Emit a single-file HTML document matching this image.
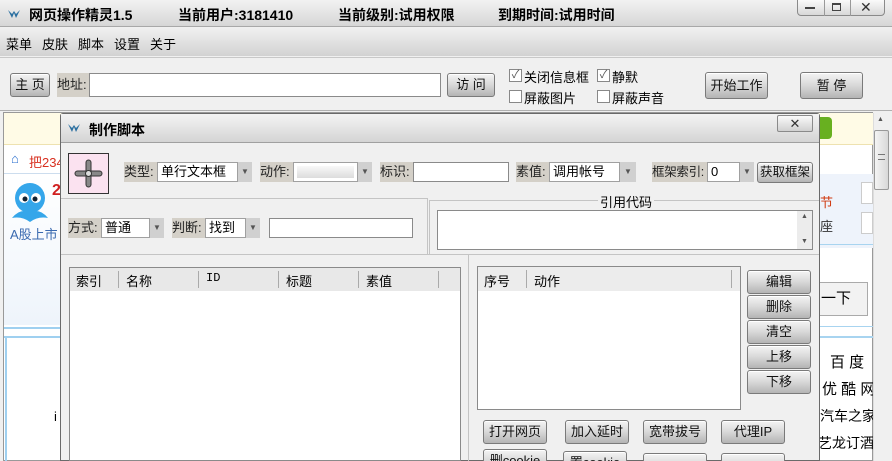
<!DOCTYPE html>
<html style="width:892px;height:461px;overflow:hidden"><head><meta charset="utf-8"><style>
*{margin:0;padding:0;box-sizing:border-box}
body{width:892px;height:461px;overflow:hidden;position:relative;background:#f0f0f0;font-family:"Liberation Sans","Noto Sans CJK SC",sans-serif;font-size:13px;color:#000}
.a{position:absolute;white-space:nowrap}
.btn{position:absolute;border:1px solid #7a7a7a;border-radius:3px;background:linear-gradient(#f4f4f4,#d8d8d8 50%,#b4b4b4);text-align:center;font-size:13px;color:#111;box-shadow:inset 0 1px 0 #fff;white-space:nowrap;overflow:hidden}
.lbl{position:absolute;background:#d4d0c8;height:20px;line-height:20px;font-size:13px;color:#222;white-space:nowrap;overflow:hidden}
.inp{position:absolute;background:#fff;border:1px solid #8a8a8a}
.sel{position:absolute;background:#fff;border:1px solid #a0a0a0;height:20px;line-height:18px;padding-left:3px;font-size:13px;white-space:nowrap;overflow:hidden}
.sel i{position:absolute;top:3px;bottom:3px;right:3px;width:26px;background:linear-gradient(#f8f8f8,#dcdcdc)}
.arr{position:absolute;background:#d0d0d0;height:20px;width:14px;color:#555;font-size:8px;line-height:20px;text-align:center}
.cb{position:absolute;width:13px;height:13px;border:1px solid #888;background:#fff;font-size:11px;line-height:11px;text-align:center;color:#555}
.b{font-weight:bold}
#clip{position:absolute;left:0;top:0;width:892px;height:461px;overflow:hidden}
</style></head><body><div id="clip">
<div class="a" style="left:0;top:0;width:892px;height:27px;background:linear-gradient(#f2f2f2,#d6d6d6);border-bottom:1px solid #a8a8a8"></div>
<svg class="a" style="left:7px;top:8px" width="14" height="12"><path d="M1 2 L5 10 L7 5 L9 10 L13 2 L9 6 L7 3 L5 6Z" fill="#2a6fa0"/></svg>
<div class="a b" style="left:29px;top:5px;font-size:14px">网页操作精灵1.5</div>
<div class="a b" style="left:178px;top:5px;font-size:14px">当前用户:3181410</div>
<div class="a b" style="left:338px;top:5px;font-size:14px">当前级别:试用权限</div>
<div class="a b" style="left:498px;top:5px;font-size:14px">到期时间:试用时间</div>
<div class="a" style="left:797px;top:-1px;width:88px;height:17px;border:1px solid #8a8a8a;border-radius:0 0 4px 4px;background:linear-gradient(#fafafa,#d8d8d8)"></div>
<div class="a" style="left:824px;top:0;width:1px;height:16px;background:#999"></div>
<div class="a" style="left:850px;top:0;width:1px;height:16px;background:#999"></div>
<div class="a" style="left:805px;top:7px;width:10px;height:2px;background:#444"></div>
<div class="a" style="left:832px;top:3px;width:9px;height:8px;border:1px solid #444;border-top-width:2px"></div>
<div class="a" style="left:860px;top:-1px;font-size:14px;color:#333">✕</div>
<div class="a" style="left:0;top:28px;width:892px;height:28px;background:linear-gradient(#f0f0f0,#d2d2d2)"></div>
<div class="a" style="left:6px;top:34px">菜单</div>
<div class="a" style="left:42px;top:34px">皮肤</div>
<div class="a" style="left:78px;top:34px">脚本</div>
<div class="a" style="left:114px;top:34px">设置</div>
<div class="a" style="left:150px;top:34px">关于</div>
<div class="a" style="left:0;top:57px;width:892px;height:1px;background:#c8c8c8"></div>
<div class="btn" style="left:10px;top:73px;width:40px;height:24px;line-height:22px">主 页</div>
<div class="lbl" style="left:57px;top:73px;width:32px;height:24px;line-height:24px">地址:</div>
<div class="inp" style="left:89px;top:73px;width:352px;height:24px"></div>
<div class="btn" style="left:447px;top:73px;width:48px;height:24px;line-height:22px">访 问</div>
<div class="cb" style="left:509px;top:69px">✓</div><div class="a" style="left:524px;top:67px">关闭信息框</div>
<div class="cb" style="left:597px;top:69px">✓</div><div class="a" style="left:612px;top:67px">静默</div>
<div class="cb" style="left:509px;top:90px"></div><div class="a" style="left:524px;top:88px">屏蔽图片</div>
<div class="cb" style="left:597px;top:90px"></div><div class="a" style="left:612px;top:88px">屏蔽声音</div>
<div class="btn" style="left:705px;top:72px;width:63px;height:27px;line-height:25px">开始工作</div>
<div class="btn" style="left:800px;top:72px;width:63px;height:27px;line-height:25px">暂 停</div>
<div class="a" style="left:0;top:110px;width:892px;height:1px;background:#b0b0b0"></div>
<div class="a" style="left:3px;top:112px;width:870px;height:349px;background:#fff;border:1px solid #999"></div>
<div class="a" style="left:4px;top:113px;width:869px;height:32px;background:#fffbe6;border-bottom:1px solid #eee2b0"></div>
<div class="a" style="left:4px;top:146px;width:56px;height:28px;background:#fff;border-bottom:1px solid #cde"></div>
<div class="a" style="left:11px;top:151px;color:#2a6fcf;font-size:13px">⌂</div>
<div class="a" style="left:29px;top:152px;color:#d83020">把234</div>
<div class="a" style="left:4px;top:175px;width:56px;height:150px;background:linear-gradient(#fff,#eef4fb)"></div>
<svg class="a" style="left:8px;top:180px" width="44" height="45"><ellipse cx="22" cy="18" rx="15" ry="15" fill="#35a6ea"/><circle cx="16" cy="18" r="5" fill="#fff"/><circle cx="28" cy="18" r="5" fill="#fff"/><circle cx="17" cy="19" r="2.5" fill="#123"/><circle cx="27" cy="19" r="2.5" fill="#123"/><path d="M4 38 Q12 28 22 32 Q32 28 40 38 Q30 36 22 42 Q14 36 4 38Z" fill="#35a6ea"/></svg>
<div class="a b" style="left:52px;top:182px;color:#d02020;font-size:16px">2</div>
<div class="a" style="left:10px;top:224px;color:#3a6ab0">A股上市</div>
<div class="a" style="left:4px;top:327px;width:56px;height:2px;background:#9fd0f0"></div>
<div class="a" style="left:4px;top:336px;width:56px;height:2px;background:#9fd0f0"></div>
<div class="a" style="left:5px;top:338px;width:2px;height:123px;background:#9fd0f0"></div>
<div class="a" style="left:54px;top:409px">i</div>
<div class="a" style="left:820px;top:117px;width:12px;height:22px;background:#68b020;border-radius:0 4px 4px 0"></div>
<div class="a" style="left:819px;top:174px;width:54px;height:74px;background:#eef3fb"></div>
<div class="a" style="left:820px;top:192px;color:#d03a10">节</div>
<div class="a" style="left:820px;top:216px;color:#333">座</div>
<div class="a" style="left:861px;top:182px;width:12px;height:22px;border:1px solid #ccc;background:#fff"></div>
<div class="a" style="left:861px;top:212px;width:12px;height:22px;border:1px solid #ccc;background:#fff"></div>
<div class="a" style="left:819px;top:244px;width:54px;height:1px;background:#a8d4f0"></div>
<div class="a" style="left:814px;top:282px;width:54px;height:34px;border:1px solid #aaa;background:#f2f2f2;font-size:15px;line-height:32px;padding-left:6px">一下</div>
<div class="a" style="left:819px;top:326px;width:54px;height:1px;background:#a8d4f0"></div>
<div class="a" style="left:819px;top:336px;width:54px;height:2px;background:#a8d4f0"></div>
<div class="a" style="left:830px;top:351px;font-size:15px">百 度</div>
<div class="a" style="left:822px;top:378px;font-size:15px">优 酷 网</div>
<div class="a" style="left:820px;top:406px;font-size:14px">汽车之家</div>
<div class="a" style="left:818px;top:433px;font-size:14px">艺龙订酒</div>
<div class="a" style="left:873px;top:113px;width:17px;height:348px;background:#f0f0f0;border-left:1px solid #ddd"></div>
<div class="a" style="left:877px;top:116px;font-size:7px;color:#555">▲</div>
<div class="a" style="left:874px;top:130px;width:15px;height:60px;border:1px solid #999;border-radius:2px;background:linear-gradient(90deg,#f4f4f4,#d8d8d8)"></div>
<div class="a" style="left:878px;top:154px;width:7px;height:6px;border-top:1px solid #777;border-bottom:1px solid #777"></div>
<div class="a" style="left:60px;top:113px;width:760px;height:348px;background:#f0f0f0;border:1px solid #6a6a6a;border-radius:3px 3px 0 0"></div>
<div class="a" style="left:61px;top:114px;width:758px;height:29px;background:linear-gradient(#f4f4f4,#d4d4d4);border-bottom:1px solid #a0a0a0"></div>
<svg class="a" style="left:67px;top:122px" width="14" height="12"><path d="M1 2 L5 10 L7 5 L9 10 L13 2 L9 6 L7 3 L5 6Z" fill="#2a6fa0"/></svg>
<div class="a b" style="left:89px;top:120px;font-size:14px">制作脚本</div>
<div class="a" style="left:777px;top:115px;width:36px;height:17px;border:1px solid #8a8a8a;border-radius:2px;background:linear-gradient(#fafafa,#d0d0d0);text-align:center;font-size:13px;line-height:15px;color:#333">✕</div>
<div class="a" style="left:68px;top:153px;width:41px;height:41px;background:#fbe2f0;border:1px solid #333"></div>
<svg class="a" style="left:72px;top:157px" width="33" height="33"><rect x="14" y="3" width="5" height="27" rx="2.5" fill="#888" stroke="#333"/><rect x="3" y="14" width="27" height="5" rx="2.5" fill="#888" stroke="#333"/><circle cx="16.5" cy="16.5" r="3" fill="#ddd" stroke="#333"/></svg>
<div class="lbl" style="left:124px;top:162px;width:33px">类型:</div>
<div class="sel" style="left:157px;top:162px;width:81px">单行文本框</div>
<div class="arr" style="left:238px;top:162px">▼</div>
<div class="lbl" style="left:260px;top:162px;width:33px">动作:</div>
<div class="sel" style="left:293px;top:162px;width:65px"><i style="left:3px;right:3px;width:auto"></i></div>
<div class="arr" style="left:358px;top:162px">▼</div>
<div class="lbl" style="left:380px;top:162px;width:33px">标识:</div>
<div class="inp" style="left:413px;top:162px;width:96px;height:20px"></div>
<div class="lbl" style="left:516px;top:162px;width:33px">素值:</div>
<div class="sel" style="left:549px;top:162px;width:71px">调用帐号</div>
<div class="arr" style="left:620px;top:162px;width:16px">▼</div>
<div class="lbl" style="left:652px;top:162px;width:55px;font-size:12.5px;letter-spacing:-0.3px">框架索引:</div>
<div class="sel" style="left:707px;top:162px;width:33px">0</div>
<div class="arr" style="left:740px;top:162px">▼</div>
<div class="btn" style="left:757px;top:162px;width:56px;height:21px;line-height:19px;font-size:12.5px">获取框架</div>
<div class="a" style="left:61px;top:198px;width:367px;height:56px;border-top:1px solid #c4c4c4;border-right:1px solid #c4c4c4"></div>
<div class="lbl" style="left:68px;top:218px;width:33px">方式:</div>
<div class="sel" style="left:101px;top:218px;width:49px">普通</div>
<div class="arr" style="left:150px;top:218px">▼</div>
<div class="lbl" style="left:172px;top:218px;width:33px">判断:</div>
<div class="sel" style="left:205px;top:218px;width:41px">找到</div>
<div class="arr" style="left:246px;top:218px">▼</div>
<div class="inp" style="left:269px;top:218px;width:144px;height:20px"></div>
<div class="a" style="left:429px;top:200px;width:390px;height:54px;border-top:1px solid #c4c4c4;border-left:1px solid #c4c4c4"></div>
<div class="a" style="left:598px;top:192px;background:#f0f0f0;padding:0 2px">引用代码</div>
<div class="inp" style="left:437px;top:210px;width:376px;height:40px"></div>
<div class="a" style="left:797px;top:211px;width:15px;height:38px;background:#ececec"></div>
<div class="a" style="left:801px;top:213px;font-size:7px;color:#555">▲</div>
<div class="a" style="left:801px;top:238px;font-size:7px;color:#555">▼</div>
<div class="a" style="left:61px;top:254px;width:758px;height:1px;background:#c4c4c4"></div>
<div class="inp" style="left:69px;top:267px;width:392px;height:194px"></div>
<div class="a" style="left:70px;top:268px;width:390px;height:23px;background:#e8e8e8"></div>
<div class="a" style="left:76px;top:271px">索引</div>
<div class="a" style="left:118px;top:271px;width:1px;height:17px;background:#aaa"></div>
<div class="a" style="left:126px;top:271px">名称</div>
<div class="a" style="left:198px;top:271px;width:1px;height:17px;background:#aaa"></div>
<div class="a" style="left:206px;top:271px;font-family:'Liberation Mono',monospace;font-size:12px">ID</div>
<div class="a" style="left:278px;top:271px;width:1px;height:17px;background:#aaa"></div>
<div class="a" style="left:286px;top:271px">标题</div>
<div class="a" style="left:358px;top:271px;width:1px;height:17px;background:#aaa"></div>
<div class="a" style="left:366px;top:271px">素值</div>
<div class="a" style="left:438px;top:271px;width:1px;height:17px;background:#aaa"></div>
<div class="a" style="left:468px;top:254px;width:1px;height:207px;background:#c4c4c4"></div>
<div class="inp" style="left:477px;top:266px;width:264px;height:144px"></div>
<div class="a" style="left:478px;top:267px;width:262px;height:24px;background:#ececec"></div>
<div class="a" style="left:484px;top:271px">序号</div>
<div class="a" style="left:526px;top:270px;width:1px;height:18px;background:#aaa"></div>
<div class="a" style="left:534px;top:271px">动作</div>
<div class="a" style="left:731px;top:270px;width:1px;height:18px;background:#aaa"></div>
<div class="btn" style="left:747px;top:270px;width:64px;height:24px;line-height:22px">编辑</div>
<div class="btn" style="left:747px;top:295px;width:64px;height:24px;line-height:22px">删除</div>
<div class="btn" style="left:747px;top:320px;width:64px;height:24px;line-height:22px">清空</div>
<div class="btn" style="left:747px;top:345px;width:64px;height:24px;line-height:22px">上移</div>
<div class="btn" style="left:747px;top:370px;width:64px;height:24px;line-height:22px">下移</div>
<div class="btn" style="left:483px;top:420px;width:64px;height:24px;line-height:22px">打开网页</div>
<div class="btn" style="left:565px;top:420px;width:64px;height:24px;line-height:22px">加入延时</div>
<div class="btn" style="left:643px;top:420px;width:64px;height:24px;line-height:22px">宽带拔号</div>
<div class="btn" style="left:721px;top:420px;width:64px;height:24px;line-height:22px">代理IP</div>
<div class="btn" style="left:483px;top:449px;width:64px;height:24px;line-height:22px">删cookie</div>
<div class="btn" style="left:563px;top:451px;width:64px;height:24px;line-height:22px">置cookie</div>
<div class="btn" style="left:643px;top:453px;width:64px;height:24px"></div>
<div class="btn" style="left:721px;top:453px;width:64px;height:24px"></div>
</div></body></html>
